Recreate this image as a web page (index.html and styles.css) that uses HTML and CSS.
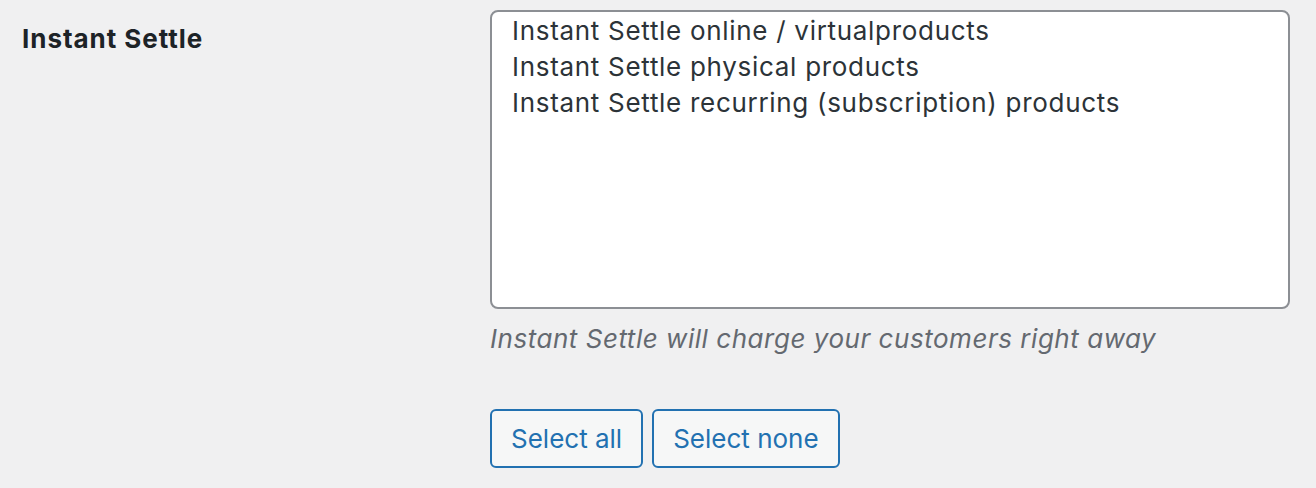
FILE: index.html
```html
<!DOCTYPE html>
<html lang="en">
<head>
    <meta charset="UTF-8">
    <title>Instant Settle</title>
    <link rel="stylesheet" href="styles.css">
</head>
<body>
    <div class="form-row">
        <div class="form-label">Instant Settle</div>
        <div class="form-field">
            <div class="listbox" role="listbox" aria-multiselectable="true">
                <div class="listbox-option" role="option">Instant Settle online / virtualproducts</div>
                <div class="listbox-option" role="option">Instant Settle physical products</div>
                <div class="listbox-option" role="option">Instant Settle recurring (subscription) products</div>
            </div>
            <p class="description">Instant Settle will charge your customers right away</p>
            <div class="actions">
                <button class="button">Select all</button>
                <button class="button">Select none</button>
            </div>
        </div>
    </div>
</body>
</html>
```

FILE: styles.css
```css
body {
    margin: 0;
    background-color: #f0f0f1;
    color: #1d2327;
    font-family: Inter, "Liberation Sans", sans-serif;
    font-size: 26px;
    letter-spacing: 0.7px;
}
.form-row {
    display: grid;
    grid-template-columns: 468px 800px;
    padding: 10px 0 0 22px;
}
.form-label {
    font-weight: 700;
    letter-spacing: 0.95px;
    padding-top: 11px;
    line-height: 36px;
}
.listbox {
    height: 299px;
    background-color: #fff;
    border: 2px solid #8c8f94;
    border-radius: 8px;
    padding: 1px 20px;
    box-sizing: border-box;
}
.listbox-option {
    line-height: 36px;
    color: #2c3338;
}
.description {
    margin: 10px 0 0;
    font-style: italic;
    letter-spacing: 0.53px;
    color: #646970;
    line-height: 40px;
}
.actions {
    display: flex;
    gap: 9px;
    margin-top: 50px;
}
.button {
    font-family: inherit;
    font-size: 26px;
    letter-spacing: 0;
    color: #2271b1;
    background-color: #f6f7f7;
    border: 2px solid #2271b1;
    border-radius: 6px;
    height: 59px;
    padding: 0 19px;
    cursor: pointer;
}
```
